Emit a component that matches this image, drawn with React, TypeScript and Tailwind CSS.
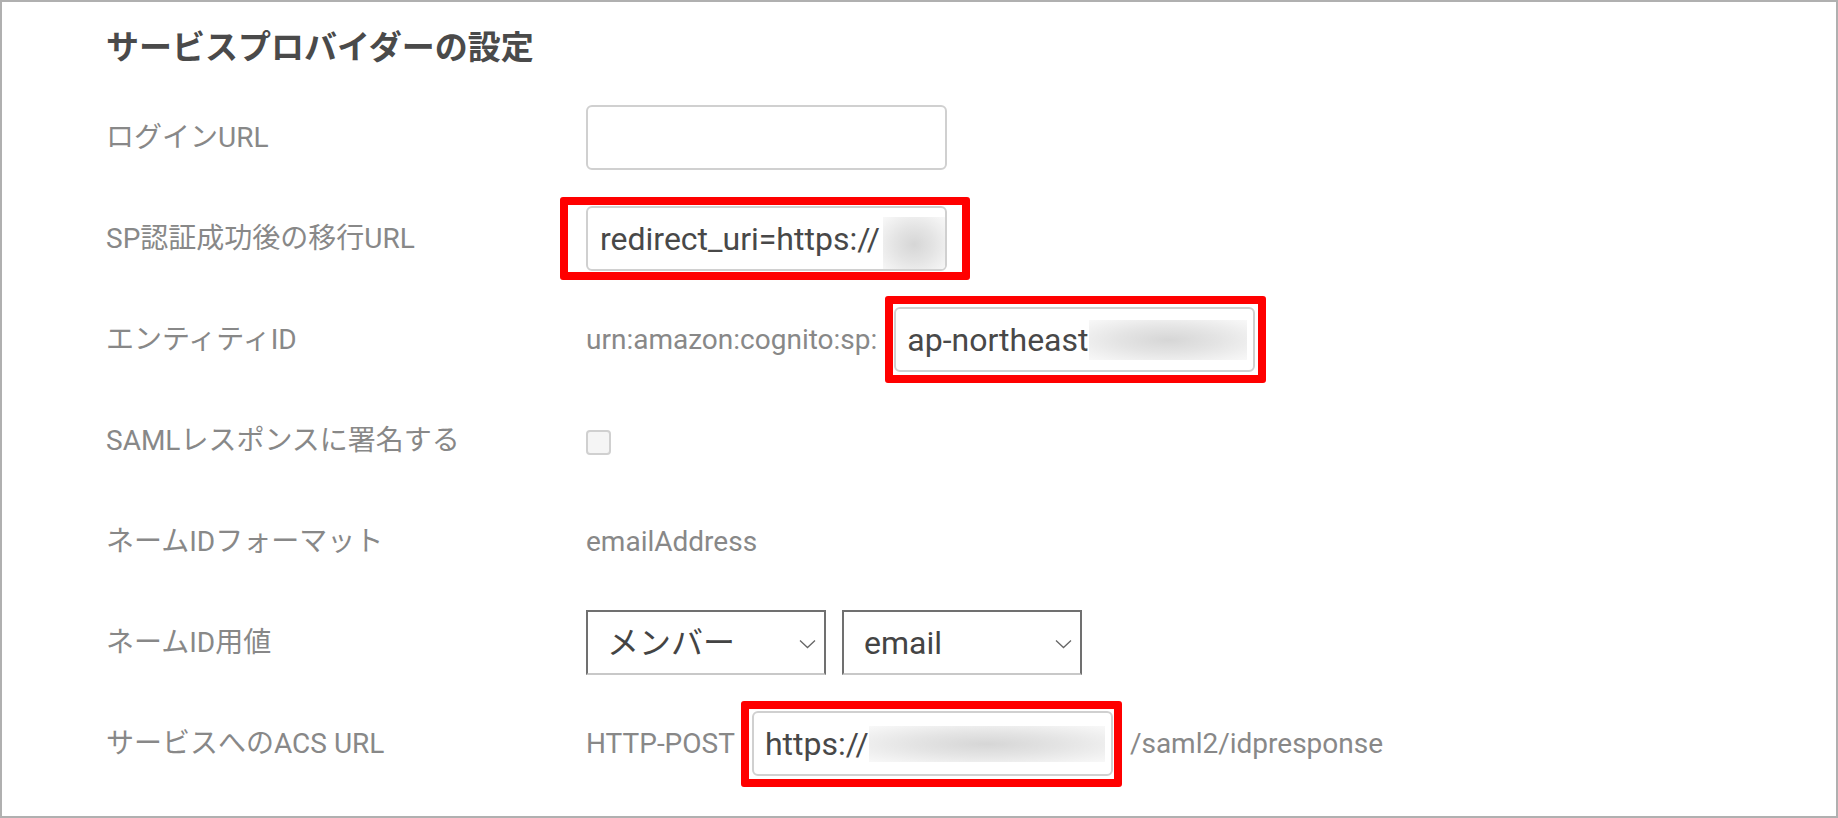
// SAML サービスプロバイダー設定フォームの画面。
import type { ReactNode } from "react";

const FONT = "font-['Roboto','Noto_Sans_CJK_JP',sans-serif]";

// 赤枠の注釈つきラッパー。
function Marked({ children, box }: { children: ReactNode; box: string }): JSX.Element {
  return (
    <div className="relative">
      {children}
      <span className={`pointer-events-none absolute rounded-[3px] border-[8px] border-[#ff0000] ${box}`} />
    </div>
  );
}

// ぼかし済みの値。
function Blur({ size }: { size: string }): JSX.Element {
  return <span className={`inline-block bg-[radial-gradient(ellipse_at_center,#d6d6d6_0%,#e4e4e4_45%,#f3f3f3_85%,#f8f8f8_100%)] ${size}`} />;
}

function TextBox({ children, pad = "pl-[12px]" }: { children?: ReactNode; pad?: string }): JSX.Element {
  return (
    <div className={`flex h-[65px] w-[361px] items-center overflow-hidden rounded-[6px] border-2 border-[#d0d0d0] bg-white text-[32px] text-[#484848] ${pad}`}>
      {children}
    </div>
  );
}

function Select({ value, width }: { value: string; width: string }): JSX.Element {
  return (
    <div className={`relative flex h-[65px] items-center border-2 border-[#707070] border-b-[#c8c8c8] bg-white text-[32px] text-[#444] ${width}`}>
      <span>{value}</span>
      <svg className="absolute right-[8px] top-[27px]" width="17" height="10" viewBox="0 0 17 10" fill="none">
        <path d="M1 1.5l7.5 7 7.5-7" stroke="#666" strokeWidth="1.3" />
      </svg>
    </div>
  );
}

function Row({ label, children }: { label: string; children: ReactNode }): JSX.Element {
  return (
    <div className="grid h-[101px] grid-cols-[480px_1fr] items-center">
      <div className="text-[28px] text-[#888]">{label}</div>
      <div className="flex items-center gap-[17px] text-[28px] text-[#888]">{children}</div>
    </div>
  );
}

export default function App(): JSX.Element {
  return (
    <div className={`h-[818px] w-[1838px] border-2 border-[#b0b0b0] bg-white pl-[104px] ${FONT}`}>
      <h1 className="flex h-[85px] items-center pt-[6px] text-[33px] font-bold text-[#4a4a4a]">サービスプロバイダーの設定</h1>
      <Row label="ログインURL">
        <TextBox />
      </Row>
      <Row label="SP認証成功後の移行URL">
        <Marked box="-left-[26px] -right-[23px] -top-[9px] -bottom-[9px]">
          <TextBox>
            redirect_uri=https://
            <Blur size="ml-[3px] h-[55px] w-[62px] mt-[12px]" />
          </TextBox>
        </Marked>
      </Row>
      <Row label="エンティティID">
        <span>urn:amazon:cognito:sp:</span>
        <Marked box="-left-[9px] -right-[11px] -top-[11px] -bottom-[11px]">
          <TextBox pad="pl-[11px]">
            ap-northeast
            <Blur size="h-[40px] w-[158px]" />
          </TextBox>
        </Marked>
      </Row>
      <Row label="SAMLレスポンスに署名する">
        <span className="mt-[3px] h-[25px] w-[25px] rounded-[4px] border-2 border-[#d0d0d0] bg-[#f5f5f5]" />
      </Row>
      <Row label="ネームIDフォーマット">
        <span>emailAddress</span>
      </Row>
      <Row label="ネームID用値">
        <div className="flex gap-[16px]">
          <Select value="メンバー" width="w-[240px] pl-[19px]" />
          <Select value="email" width="w-[240px] pl-[20px]" />
        </div>
      </Row>
      <Row label="サービスへのACS URL">
        <span>HTTP-POST</span>
        <Marked box="-left-[11px] -right-[9px] -top-[10px] -bottom-[11px]">
          <TextBox pad="pl-[11px]">
            https://
            <Blur size="h-[36px] w-[236px]" />
          </TextBox>
        </Marked>
        <span>/saml2/idpresponse</span>
      </Row>
    </div>
  );
}
